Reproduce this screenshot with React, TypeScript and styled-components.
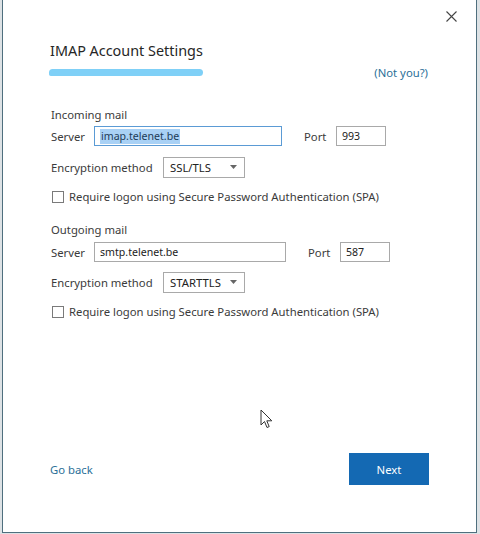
import React from "react";
import styled, { createGlobalStyle } from "styled-components";

const Global = createGlobalStyle`
  html, body { margin: 0; padding: 0; }
  body {
    background: #dde2e5;
    font-family: "Noto Sans", "Open Sans", sans-serif;
    width: 480px;
    height: 534px;
    overflow: hidden;
  }
`;

const Dialog = styled.div`
  position: relative;
  box-sizing: border-box;
  margin-left: 2px;
  width: 475px;
  height: 533px;
  background: #ffffff;
  border: 1px solid #4f6f7e;
  border-top: none;
  display: flex;
  flex-direction: column;
`;

const TopBar = styled.div`
  display: flex;
  justify-content: flex-end;
  padding: 9px 18px 0 0;
  height: 22px;
`;

const CloseBtn = styled.button`
  border: none;
  background: transparent;
  padding: 0;
  width: 14px;
  height: 14px;
  display: flex;
  align-items: center;
  justify-content: center;
  cursor: pointer;
`;

const Body = styled.div`
  display: flex;
  flex-direction: column;
  padding: 0 0 0 47px;
  flex: 1;
`;

const Title = styled.h1`
  margin: 10px 0 0 0;
  font-size: 14.4px;
  font-weight: 400;
  color: #262626;
  line-height: 20px;
`;

const AccountRow = styled.div`
  display: flex;
  align-items: center;
  justify-content: space-between;
  width: 378px;
  height: 16px;
  margin-top: 3px;
`;

const Scribble = styled.div`
  width: 154px;
  height: 7px;
  border-radius: 4px 4px 4px 2px;
  background: #7fd0f7;
  margin-left: -1px;
  margin-top: 1px;
`;

const Link = styled.a`
  color: #2b6f98;
  font-size: 11.3px;
  text-decoration: none;
  cursor: pointer;
`;

const SectionTitle = styled.div<{ $top: number }>`
  margin-top: ${(p) => p.$top}px;
  font-size: 11.3px;
  color: #3b3b3b;
  line-height: 16px;
  padding-left: 1px;
`;

const FieldRow = styled.div<{ $top: number }>`
  display: flex;
  align-items: center;
  margin-top: ${(p) => p.$top}px;
  height: 20px;
  padding-left: 1px;
`;

const Label = styled.span<{ $w: number }>`
  width: ${(p) => p.$w}px;
  font-size: 11.3px;
  color: #3b3b3b;
  flex: none;
`;

const TextBox = styled.div<{ $w: number; $focus?: boolean }>`
  box-sizing: border-box;
  width: ${(p) => p.$w}px;
  height: 20px;
  border: 1px solid ${(p) => (p.$focus ? "#5b9bd5" : "#a9a9a9")};
  display: flex;
  align-items: center;
  padding-left: 5px;
  font-size: 10.6px;
  color: #222;
  flex: none;
`;

const Selected = styled.span`
  background: #a9d1f5;
  color: #1d3b57;
  padding: 0 1px;
  line-height: 15px;
`;

const PortLabel = styled.span<{ $gap: number }>`
  margin-left: ${(p) => p.$gap}px;
  width: 32px;
  font-size: 11.3px;
  color: #3b3b3b;
  flex: none;
`;

const Select = styled.div`
  box-sizing: border-box;
  width: 82px;
  height: 21px;
  border: 1px solid #a9a9a9;
  display: flex;
  align-items: center;
  justify-content: space-between;
  padding: 0 7px 0 6px;
  font-size: 11.3px;
  color: #222;
  flex: none;
`;

const CheckRow = styled.label<{ $top: number }>`
  display: flex;
  align-items: center;
  margin-top: ${(p) => p.$top}px;
  padding-left: 2px;
  font-size: 11.3px;
  color: #3b3b3b;
  gap: 5px;
`;

const CheckBox = styled.span`
  box-sizing: border-box;
  width: 12px;
  height: 12px;
  border: 1px solid #7a7a7a;
  background: #fff;
  flex: none;
`;

const Footer = styled.div`
  display: flex;
  align-items: center;
  justify-content: space-between;
  width: 379px;
  margin-top: auto;
  margin-bottom: 47px;
`;

const NextBtn = styled.button`
  width: 80px;
  height: 32px;
  border: none;
  background: #1469b3;
  color: #fff;
  font-family: "Noto Sans", "Open Sans", sans-serif;
  font-size: 11.3px;
  cursor: pointer;
`;

const Pointer = styled.svg`
  position: absolute;
  left: 257px;
  top: 409px;
`;

function Arrow() {
  return (
    <svg width="7" height="4" viewBox="0 0 7 4">
      <path d="M0 0 L7 0 L3.5 4 Z" fill="#666" />
    </svg>
  );
}

export default function App() {
  return (
    <>
      <Global />
      <Dialog>
        <TopBar>
          <CloseBtn aria-label="Close">
            <svg width="11" height="11" viewBox="0 0 11 11">
              <path d="M0.5 0.5 L10.5 10.5 M10.5 0.5 L0.5 10.5" stroke="#444" strokeWidth="1.1" />
            </svg>
          </CloseBtn>
        </TopBar>
        <Body>
          <Title>IMAP Account Settings</Title>
          <AccountRow>
            <Scribble />
            <Link>(Not you?)</Link>
          </AccountRow>
          <SectionTitle $top={27}>Incoming mail</SectionTitle>
          <FieldRow $top={3}>
            <Label $w={43}>Server</Label>
            <TextBox $w={188} $focus>
              <Selected>imap.telenet.be</Selected>
            </TextBox>
            <PortLabel $gap={22}>Port</PortLabel>
            <TextBox $w={50}>993</TextBox>
          </FieldRow>
          <FieldRow $top={11}>
            <Label $w={112}>Encryption method</Label>
            <Select>
              <span>SSL/TLS</span>
              <Arrow />
            </Select>
          </FieldRow>
          <CheckRow $top={12}>
            <CheckBox />
            <span>Require logon using Secure Password Authentication (SPA)</span>
          </CheckRow>
          <SectionTitle $top={18}>Outgoing mail</SectionTitle>
          <FieldRow $top={4}>
            <Label $w={43}>Server</Label>
            <TextBox $w={192}>smtp.telenet.be</TextBox>
            <PortLabel $gap={22}>Port</PortLabel>
            <TextBox $w={50}>587</TextBox>
          </FieldRow>
          <FieldRow $top={10}>
            <Label $w={112}>Encryption method</Label>
            <Select>
              <span>STARTTLS</span>
              <Arrow />
            </Select>
          </FieldRow>
          <CheckRow $top={12}>
            <CheckBox />
            <span>Require logon using Secure Password Authentication (SPA)</span>
          </CheckRow>
          <Footer>
            <Link>Go back</Link>
            <NextBtn>Next</NextBtn>
          </Footer>
        </Body>
        <Pointer width="14" height="20" viewBox="0 0 14 20">
          <path d="M1 1 L1 16 L4.5 12.5 L7 18.5 L9.2 17.6 L6.8 11.8 L11.8 11.8 Z" fill="#fff" stroke="#333" strokeWidth="1" strokeLinejoin="round" />
        </Pointer>
      </Dialog>
    </>
  );
}
